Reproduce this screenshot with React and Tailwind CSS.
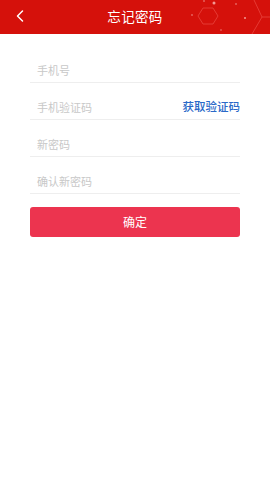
import { ChevronLeft } from 'lucide-react';

const fields = [
    { placeholder: '手机号' },
    { placeholder: '手机验证码', action: '获取验证码' },
    { placeholder: '新密码' },
    { placeholder: '确认新密码' },
];

const App = () => {
    return (
        <div className="w-[270px] h-[480px] bg-white flex flex-col" style={{ fontFamily: '"Noto Sans CJK SC", "Noto Sans", sans-serif' }}>
            {/* Header */}
            <div className="relative h-[34px] bg-[#d5110b] flex items-center justify-center overflow-hidden">
                <button className="absolute left-[10px] top-[6px] text-white">
                    <ChevronLeft size={20} strokeWidth={1.8} />
                </button>
                <span className="text-white text-[13.5px] leading-none tracking-wide">忘记密码</span>
                {/* decoration */}
                <svg className="absolute right-0 top-0" width="80" height="34" viewBox="0 0 80 34">
                    <polygon points="8,16 13,8 23,8 28,16 23,24 13,24" fill="none" stroke="#e8453f" strokeWidth="0.8" />
                    <path d="M62 34 L72 17 L80 17" fill="none" stroke="#e8453f" strokeWidth="0.8" />
                    <path d="M64 0 L72 17" fill="none" stroke="#e8453f" strokeWidth="0.8" />
                    <circle cx="24" cy="3" r="1.5" fill="#f29a95" />
                    <circle cx="14" cy="1" r="0.8" fill="#f29a95" />
                    <circle cx="46" cy="4" r="0.8" fill="#f29a95" />
                    <circle cx="55" cy="18" r="1" fill="#f29a95" />
                    <circle cx="2" cy="15" r="0.8" fill="#f29a95" />
                    <circle cx="31" cy="30" r="0.7" fill="#f29a95" />
                </svg>
            </div>

            {/* Form */}
            <div className="px-[30px] pt-[12px] flex flex-col">
                {fields.map((f) => (
                    <div key={f.placeholder} className="h-[37px] flex items-end border-b border-[#eeeeee]">
                        <div className="flex-1 flex items-center justify-between h-[24px]">
                            <span className="text-[11px] text-[#c8c8c8] leading-none pl-[7px]">{f.placeholder}</span>
                            {f.action && (
                                <span className="text-[11.5px] font-medium text-[#2a69c8] leading-none">{f.action}</span>
                            )}
                        </div>
                    </div>
                ))}

                <button className="mt-[13px] h-[30px] w-full rounded-[3px] bg-[#ec344f] text-white text-[12px] leading-none">
                    确定
                </button>
            </div>
        </div>
    );
};

export default App;
